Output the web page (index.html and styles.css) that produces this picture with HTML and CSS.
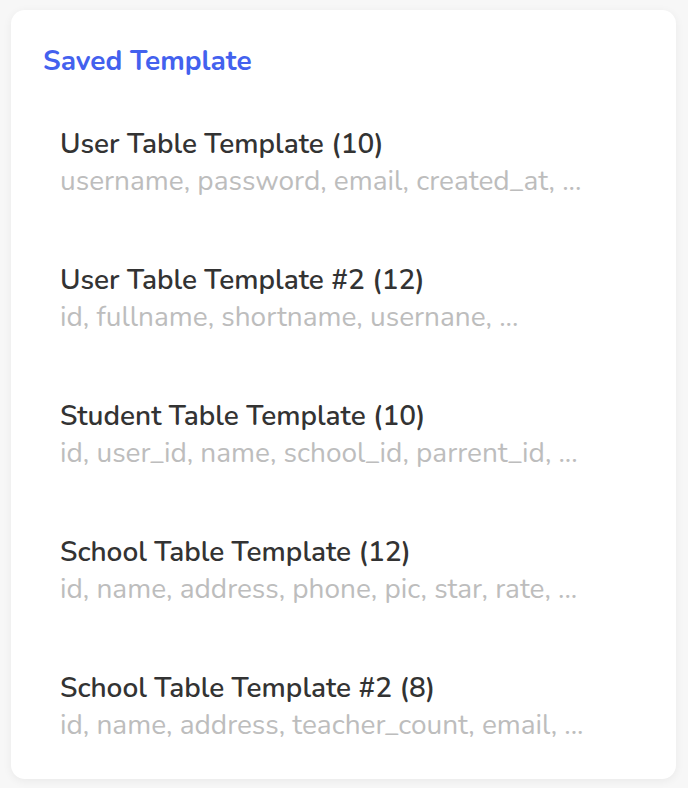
FILE: index.html
```html
<!DOCTYPE html>
<html>
<head>
<meta charset="utf-8">
<link rel="stylesheet" href="styles.css">
</head>
<body>
<div class="card">
  <h2 class="heading">Saved Template</h2>
  <ul class="list">
    <li class="item">
      <div class="item-title">User Table Template (10)</div>
      <div class="item-fields">username, password, email, created_at, ...</div>
    </li>
    <li class="item">
      <div class="item-title">User Table Template #2 (12)</div>
      <div class="item-fields">id, fullname, shortname, usernane, ...</div>
    </li>
    <li class="item">
      <div class="item-title">Student Table Template (10)</div>
      <div class="item-fields">id, user_id, name, school_id, parrent_id, ...</div>
    </li>
    <li class="item">
      <div class="item-title">School Table Template (12)</div>
      <div class="item-fields">id, name, address, phone, pic, star, rate, ...</div>
    </li>
    <li class="item">
      <div class="item-title">School Table Template #2 (8)</div>
      <div class="item-fields">id, name, address, teacher_count, email, ...</div>
    </li>
  </ul>
</div>
</body>
</html>
```
FILE: styles.css
```css
html, body {
  margin: 0;
  padding: 0;
  background: #f7f7f7;
}
body {
  padding: 10px 12px 9px 11px;
  font-family: "Nunito", "Lato", "Open Sans", sans-serif;
}
.card {
  background: #ffffff;
  border-radius: 14px;
  box-shadow: 0 2px 10px rgba(0, 0, 0, 0.06);
  padding: 32px 32px 0 32px;
  height: 769px;
  box-sizing: border-box;
}
.heading {
  margin: 0;
  font-size: 28px;
  font-weight: 700;
  line-height: 38px;
  color: #4361ee;
}
.list {
  list-style: none;
  margin: 45px 0 0 0;
  padding: 0 0 0 17px;
  display: flex;
  flex-direction: column;
  gap: 62px;
}
.item-title {
  font-size: 28px;
  font-weight: 600;
  line-height: 38px;
  color: #333333;
}
.item-fields {
  font-size: 28px;
  line-height: 36px;
  color: #bdbdbd;
}
```
